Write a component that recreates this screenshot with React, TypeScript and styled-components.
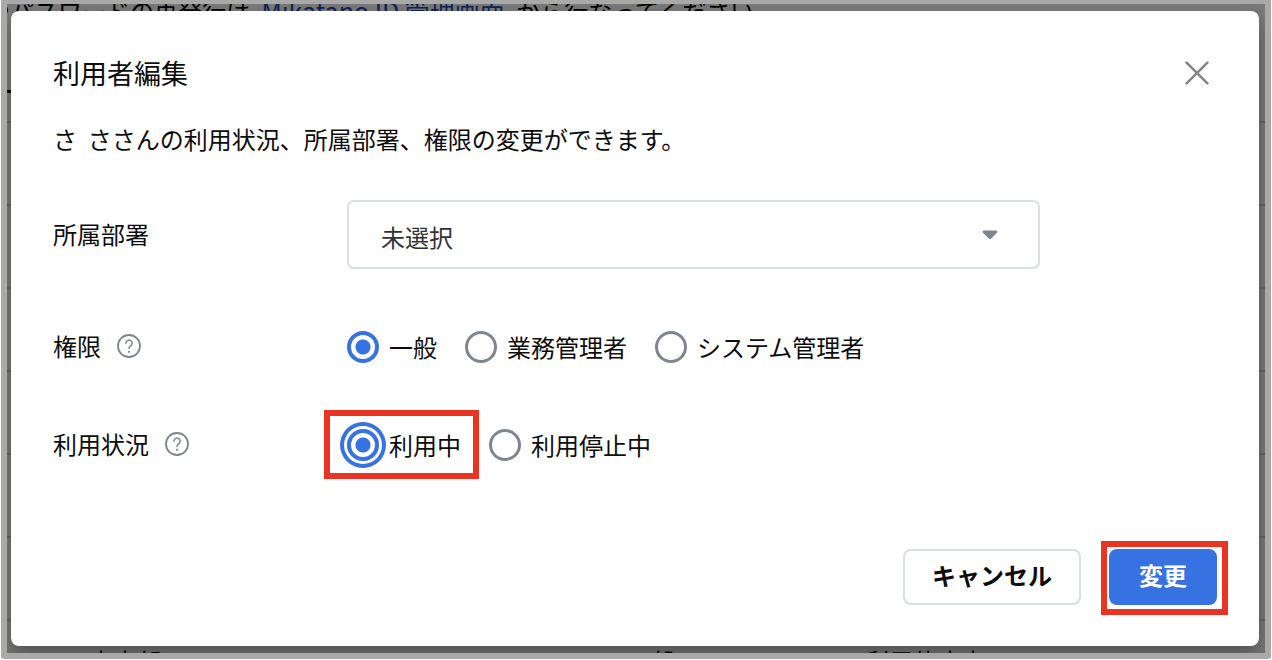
import React, { useState } from "react";
import styled, { createGlobalStyle, css } from "styled-components";

const blue = "#3772e2";
const gray = "#7f858f";
const line = "#dadfdf";
const red = "#eb3323";

const GlobalStyle = createGlobalStyle`
  *, *::before, *::after { box-sizing: border-box; }
  body {
    margin: 0;
    background: #fff;
    color: #0c0c0c;
    font-family: "Noto Sans CJK JP", "Noto Sans", sans-serif;
    font-size: 24px;
    line-height: 40px;
  }
  button, select, input { font: inherit; color: inherit; margin: 0; }
`;

const Frame = styled.div`
  position: relative;
  margin: 0 1px 1px;
  border: 6px solid #a9a9a7;
  border-top-width: 4px;
  border-radius: 0 0 3px 3px;
  overflow: hidden;
`;

const Backdrop = styled.div`
  position: absolute;
  inset: 0;
  overflow: hidden;
  background: #fff;
  color: #000;
`;

const Note = styled.p`
  width: 90%;
  height: 89px;
  margin: 0;
  border-bottom: 3px solid #000;
  line-height: 12px;
  text-indent: -21px;
  white-space: nowrap;

  a {
    margin: 0 6px;
    color: #2149b8;
    font-size: 25px;
    text-decoration: none;
  }
`;

const UserRow = styled.div`
  display: grid;
  grid-template-columns: 539px 237px 1fr;
  align-items: center;
  height: 83px;
  padding: 0 0 2px 82px;
  border-top: 2px solid #d8d8d8;

  &:first-of-type {
    margin-top: 28px;
  }
`;

const Overlay = styled.div`
  position: relative;
  padding: 7px 6px 7px 4px;
  background: rgba(0, 0, 0, 0.52);
`;

const Dialog = styled.section`
  padding: 42px 42px 41px;
  background: #fff;
  border-radius: 8px;
  box-shadow: 0 10px 20px rgba(0, 0, 0, 0.34);
`;

const Header = styled.header`
  display: flex;
  align-items: center;
  justify-content: space-between;
`;

const Title = styled.h2`
  margin: 0;
  font-size: 27px;
  font-weight: 400;
`;

const IconButton = styled.button<{ $size: number }>`
  display: flex;
  align-items: center;
  justify-content: center;
  width: ${(p) => p.$size}px;
  height: ${(p) => p.$size}px;
  padding: 0;
  border: 0;
  background: none;
  color: ${gray};
`;

const Lead = styled.p`
  margin: 26px 0 41px;
`;

const Form = styled.form`
  display: flex;
  flex-direction: column;
  gap: 58px;
`;

const Field = styled.div`
  display: grid;
  grid-template-columns: 294px 1fr;
  align-items: center;
`;

const FieldLabel = styled.div`
  display: flex;
  align-items: center;
  gap: 16px;
  height: 40px;
  padding-bottom: 2px;
`;

const SelectBox = styled.div`
  position: relative;
  max-width: 693px;

  svg {
    position: absolute;
    right: 42px;
    top: 30px;
    pointer-events: none;
  }
`;

const Select = styled.select`
  display: block;
  appearance: none;
  width: 100%;
  height: 69px;
  padding: 4px 60px 0 32px;
  border: 2px solid ${line};
  border-radius: 7px;
  background: #fff;
  color: #333;
`;

const Options = styled.div`
  display: flex;
  gap: 28px;
`;

const marked = css`
  &::after {
    content: "";
    position: absolute;
    border: 6px solid ${red};
    pointer-events: none;
  }
`;

const Option = styled.label<{ $marked?: boolean }>`
  position: relative;
  display: flex;
  align-items: center;
  gap: 10px;
  white-space: nowrap;
  ${(p) => p.$marked && marked}
  &::after {
    inset: -15px -18px -14px -23px;
  }
`;

const Radio = styled.input<{ $ring?: boolean }>`
  appearance: none;
  width: 32px;
  height: 32px;
  border: 3px solid ${gray};
  border-radius: 50%;
  background: #fff;

  &:checked {
    border: 4px solid ${blue};
    background: radial-gradient(circle, ${blue} 7px, #fff 8px);
    ${(p) => p.$ring && `box-shadow: 0 0 0 3px #fff, 0 0 0 7px ${blue};`}
  }
`;

const Footer = styled.footer`
  display: flex;
  justify-content: flex-end;
  gap: 28px;
  margin-top: 84px;
`;

const Button = styled.button<{ $primary?: boolean }>`
  position: relative;
  height: 56px;
  padding: 0 ${(p) => (p.$primary ? 28 : 27)}px 4px;
  border: 2px solid ${(p) => (p.$primary ? blue : line)};
  border-radius: 8px;
  background: ${(p) => (p.$primary ? blue : "#fff")};
  color: ${(p) => (p.$primary ? "#fff" : "#0c0c0c")};
  font-weight: 700;
  white-space: nowrap;
  ${(p) => p.$primary && marked}
  &::after {
    inset: -10px -13px -12px -10px;
  }
`;

function Help({ label }: { label: string }) {
  return (
    <IconButton type="button" $size={24} aria-label={label}>
      <svg width="24" height="24" viewBox="0 0 24 24" fill="none" stroke="currentColor" strokeLinecap="round">
        <circle cx="12" cy="12" r="11" strokeWidth="1.8" />
        <path d="M8.9 9.2a3.1 3.1 0 1 1 4.9 2.5c-1.1.8-1.8 1.3-1.8 2.8" strokeWidth="1.5" />
        <circle cx="12" cy="17.8" r="1.1" fill="currentColor" stroke="none" />
      </svg>
    </IconButton>
  );
}

interface ChoiceProps {
  name: string;
  choices: string[];
  highlight?: string;
}

function Choices({ name, choices, highlight }: ChoiceProps) {
  const [value, setValue] = useState(choices[0]);
  return (
    <Options role="radiogroup" aria-label={name}>
      {choices.map((c) => (
        <Option key={c} $marked={c === highlight}>
          <Radio type="radio" name={name} checked={c === value} onChange={() => setValue(c)} $ring={c === highlight} />
          {c}
        </Option>
      ))}
    </Options>
  );
}

export default function App() {
  return (
    <>
      <GlobalStyle />
      <Frame>
        <Backdrop aria-hidden="true">
          <Note>
            やパスワードの再発行は <a href="#id" tabIndex={-1}>Mikatano ID 管理画面</a> から行なってください
          </Note>
          {[0, 1, 2, 3, 4, 5].map((n) => (
            <UserRow key={n} />
          ))}
          <UserRow>
            <span>土木部</span>
            <span>一般</span>
            <span>利用停止中</span>
          </UserRow>
        </Backdrop>
        <Overlay>
          <Dialog role="dialog" aria-labelledby="dialog-title">
            <Header>
              <Title id="dialog-title">利用者編集</Title>
              <IconButton type="button" $size={40} aria-label="閉じる">
                <svg width="24" height="24" viewBox="0 0 24 24" fill="none" stroke="currentColor" strokeWidth="2.6" strokeLinecap="round">
                  <path d="M1.6 1.6 22.4 22.4M22.4 1.6 1.6 22.4" />
                </svg>
              </IconButton>
            </Header>
            <Lead>さ&nbsp; ささんの利用状況、所属部署、権限の変更ができます。</Lead>
            <Form id="user-form" onSubmit={(e) => e.preventDefault()}>
              <Field>
                <FieldLabel>
                  <label htmlFor="department">所属部署</label>
                </FieldLabel>
                <SelectBox>
                  <Select id="department">
                    <option>未選択</option>
                  </Select>
                  <svg width="16" height="10" viewBox="0 0 16 10" fill={gray}>
                    <path d="M2 .5h12c1.3 0 1.9 1.3 1 2.200L9.300 8.600c-.8.8-1.800.8-2.600 0L1 2.700C.1 1.800.7.5 2 .5z" />
                  </svg>
                </SelectBox>
              </Field>
              <Field>
                <FieldLabel>
                  権限
                  <Help label="権限の説明" />
                </FieldLabel>
                <Choices name="権限" choices={["一般", "業務管理者", "システム管理者"]} />
              </Field>
              <Field>
                <FieldLabel>
                  利用状況
                  <Help label="利用状況の説明" />
                </FieldLabel>
                <Choices name="利用状況" choices={["利用中", "利用停止中"]} highlight="利用中" />
              </Field>
            </Form>
            <Footer>
              <Button type="button">キャンセル</Button>
              <Button type="submit" form="user-form" $primary>変更</Button>
            </Footer>
          </Dialog>
        </Overlay>
      </Frame>
    </>
  );
}
